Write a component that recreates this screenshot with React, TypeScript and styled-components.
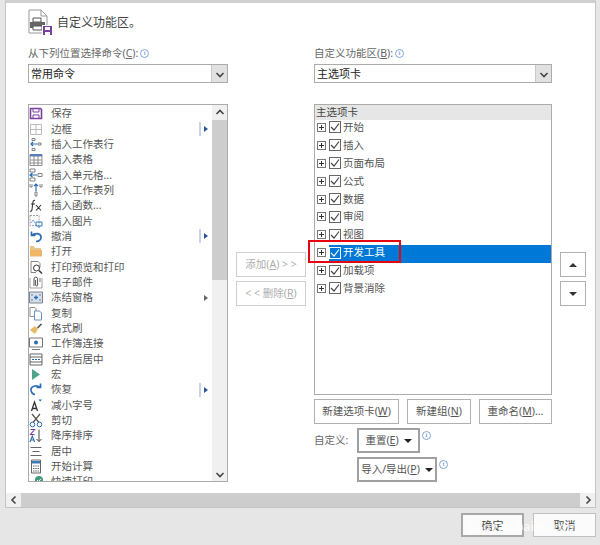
import { ReactNode } from "react";
import styled, { createGlobalStyle } from "styled-components";

const GlobalStyles = createGlobalStyle`
  * {
    box-sizing: border-box;
  }
  html, body {
    margin: 0;
    background: #e6e6e6;
  }
  body {
    font-family: "Noto Sans", "Noto Sans CJK SC", sans-serif;
    font-size: 10.5px;
    color: #4a4a4a;
  }
`;

const Page = styled.div`
  width: 600px;
  height: 545px;
  position: relative;
  overflow: hidden;
  background: #e6e6e6;
  display: flex;
  flex-direction: column;
  padding: 0 4px 0 5px;
`;

const Panel = styled.div`
  height: 508px;
  background: #fff;
  border: 1px solid #c4c4c4;
  border-top: 3px solid #d0d0d0;
  display: flex;
  flex-direction: column;
`;

const Content = styled.div`
  flex: 1;
  min-height: 0;
  padding: 6px 0 0 22px;
  display: grid;
  grid-template-columns: 200px 70px 238px 26px;
  grid-template-rows: 26px 69px 378px;
  column-gap: 8px;
`;

const Title = styled.div`
  grid-column: 1 / -1;
  display: flex;
  align-items: center;
  gap: 4px;
  font-size: 12px;
  color: #444;
`;

const Field = styled.div<{ $col: number }>`
  grid-column: ${(p) => p.$col};
  padding-top: 11px;
`;

const FieldLabel = styled.div`
  display: flex;
  align-items: center;
  gap: 2px;
  height: 15px;
  line-height: 15px;
  margin-bottom: 3px;
  color: #666;
`;

const Info = styled.span`
  width: 9px;
  height: 9px;
  border: 1px solid #7fa8dc;
  border-radius: 50%;
  color: #4f86cc;
  font-size: 7px;
  line-height: 7px;
  text-align: center;
  font-family: "Liberation Serif", serif;
  flex: none;
`;

const Select = styled.div`
  height: 19px;
  border: 1px solid #ababab;
  background: #fff;
  display: flex;
  align-items: center;
  justify-content: space-between;
  padding-left: 2px;
  line-height: 16px;
  font-size: 11px;
  color: #222;
`;

const SelectArrow = styled.span`
  width: 16px;
  height: 17px;
  background: #e1e1e1;
  border-left: 1px solid #c8c8c8;
  display: flex;
  align-items: center;
  justify-content: center;
`;

const CommandBox = styled.div`
  grid-column: 1;
  height: 378px;
  border: 1px solid #ababab;
  display: flex;
  overflow: hidden;
`;

const CommandList = styled.div`
  flex: 1;
  min-width: 0;
  margin-top: 1px;
`;

const CommandRow = styled.div`
  height: 15.35px;
  display: flex;
  align-items: center;
  position: relative;
  line-height: 15px;
  color: #555;
  white-space: nowrap;
`;

const CommandIcon = styled.span`
  width: 14px;
  height: 15px;
  margin-right: 8px;
  flex: none;
  display: flex;
  align-items: center;
  justify-content: center;
`;

const CommandArrow = styled.span<{ $blue?: boolean }>`
  margin-left: auto;
  margin-right: 4px;
  display: flex;
  align-items: center;
  gap: 3px;
  height: 14px;
  ${(p) => (p.$blue ? "border-left: 2px solid #c9d3e4; padding-left: 3px;" : "padding-left: 5px;")}
  &::after {
    content: "";
    border-left: 4px solid ${(p) => (p.$blue ? "#2b5797" : "#666")};
    border-top: 3px solid transparent;
    border-bottom: 3px solid transparent;
  }
`;

const VScroll = styled.div`
  width: 15px;
  background: #f0f0f0;
  display: flex;
  flex-direction: column;
  flex: none;
`;

const ScrollBtn = styled.div`
  height: 15px;
  flex: none;
  display: flex;
  align-items: center;
  justify-content: center;
`;

const VThumb = styled.div`
  height: 160px;
  background: #cdcdcd;
  flex: none;
`;

const Spacer = styled.div`
  flex: 1;
`;

const MiddleCol = styled.div`
  grid-column: 2;
  padding-top: 148px;
  display: flex;
  flex-direction: column;
  gap: 4px;
`;

const Button = styled.div<{ $w?: number; $disabled?: boolean }>`
  height: 25px;
  width: ${(p) => (p.$w ? `${p.$w}px` : "auto")};
  flex: none;
  border: 1px solid ${(p) => (p.$disabled ? "#cfcfcf" : "#b0b0b0")};
  background: #fff;
  color: ${(p) => (p.$disabled ? "#adadad" : "#555")};
  display: flex;
  align-items: center;
  justify-content: center;
  gap: 5px;
  white-space: nowrap;
  line-height: 15px;
`;

const RightCol = styled.div`
  grid-column: 3;
  display: flex;
  flex-direction: column;
`;

const Tree = styled.div`
  height: 291px;
  border: 1px solid #ababab;
  flex: none;
`;

const TreeHeader = styled.div`
  height: 15px;
  background: #e6e6e6;
  line-height: 15px;
  padding-left: 1px;
  color: #444;
`;

const TreeRow = styled.div`
  height: 17.9px;
  display: flex;
  align-items: center;
  padding-left: 2px;
  line-height: 15px;
  color: #555;
`;

const Expander = styled.span`
  width: 9px;
  height: 9px;
  border: 1px solid #777;
  margin: 0 3px 3px 0;
  position: relative;
  flex: none;
  &::before {
    content: "";
    position: absolute;
    left: 1px;
    right: 1px;
    top: 3px;
    height: 1px;
    background: #333;
  }
  &::after {
    content: "";
    position: absolute;
    top: 1px;
    bottom: 1px;
    left: 3px;
    width: 1px;
    background: #333;
  }
`;

const TreeLabel = styled.div<{ $active?: boolean }>`
  flex: 1;
  height: 100%;
  padding-bottom: 3px;
  display: flex;
  align-items: center;
  gap: 2px;
  background: ${(p) => (p.$active ? "#0078d7" : "transparent")};
  color: ${(p) => (p.$active ? "#fff" : "#555")};
`;

const Check = styled.span<{ $active?: boolean }>`
  width: 12px;
  height: 12px;
  border: 1px solid ${(p) => (p.$active ? "#fff" : "#666")};
  display: flex;
  align-items: center;
  justify-content: center;
  flex: none;
`;

const TreeActions = styled.div`
  display: flex;
  justify-content: space-between;
  margin-top: 4px;
`;

const CustomRow = styled.div`
  display: flex;
  gap: 2px;
  margin-top: 4px;
  align-items: flex-start;
`;

const CustomLabel = styled.div`
  width: 41px;
  flex: none;
  padding-top: 5px;
  color: #666;
  line-height: 15px;
`;

const MenuButton = styled(Button)`
  border: 2px solid #a0a0a0;
  color: #555;
  &::after {
    content: "";
    border-top: 4px solid #222;
    border-left: 4px solid transparent;
    border-right: 4px solid transparent;
  }
`;

const RowInfo = styled(Info)`
  margin-top: 3px;
`;

const MoveCol = styled.div`
  grid-column: 4;
  padding-top: 148px;
  display: flex;
  flex-direction: column;
  gap: 4px;
`;

const Triangle = styled.span<{ $up?: boolean }>`
  border-left: 4px solid transparent;
  border-right: 4px solid transparent;
  ${(p) => (p.$up ? "border-bottom: 4px solid #333;" : "border-top: 4px solid #333;")}
`;

const HScroll = styled.div`
  height: 14px;
  background: #f0f0f0;
  display: flex;
  flex: none;
`;

const HBtn = styled.div`
  width: 15px;
  display: flex;
  align-items: center;
  justify-content: center;
  flex: none;
`;

const HThumb = styled.div`
  flex: 1;
  background: #cdcdcd;
`;

const Footer = styled.div`
  display: flex;
  justify-content: flex-end;
  gap: 9px;
  padding-top: 5px;
`;

const FooterButton = styled.div<{ $primary?: boolean }>`
  width: 63px;
  height: 24px;
  background: #fbfbfb;
  border: ${(p) => (p.$primary ? "2px solid #a8a8a8" : "1px solid #c0c0c0")};
  display: flex;
  align-items: center;
  justify-content: center;
  color: #444;
  font-size: 11px;
`;

const Highlight = styled.div`
  position: absolute;
  left: 308px;
  top: 240px;
  width: 93px;
  height: 23px;
  border: 2px solid #e5060f;
`;

const Watermark = styled.div`
  position: absolute;
  left: 468px;
  top: 518px;
  font-size: 12px;
  font-weight: 700;
  color: rgba(255, 255, 255, 0.7);
  white-space: nowrap;
`;

const Chevron = ({ dir }: { dir: "up" | "down" | "left" | "right" }) => {
  const paths = { up: "M1.5 6 5 2.5 8.5 6", down: "M1.5 4 5 7.5 8.5 4", left: "M6.5 1.5 3 5 6.5 8.5", right: "M3.5 1.5 7 5 3.5 8.5" };
  return (
    <svg width="10" height="10" viewBox="0 0 10 10">
      <path d={paths[dir]} fill="none" stroke="#444" strokeWidth="1.6" />
    </svg>
  );
};

const Svg = ({ children }: { children: ReactNode }) => (
  <svg width="14" height="15" viewBox="0 0 14 15" fill="none">
    {children}
  </svg>
);

const icons: Record<string, ReactNode> = {
  save: (
    <>
      <path d="M1.5 2.5h10l1 1v9h-11z" stroke="#7b3fa0" strokeWidth="1.6" />
      <path d="M4 3v3h6V3M4 13V9h6v4" stroke="#7b3fa0" />
    </>
  ),
  border: <path d="M1.5 2.5h11v10h-11zM7 2.5v10M1.5 7.5h11" stroke="#bbb" />,
  insertRow: (
    <>
      <path d="M3 1.5h3v2H3zM3 11.5h3v2H3zM9 6h3v2H9z" stroke="#666" strokeWidth=".8" />
      <path d="M8 7H2M4 5 2 7l2 2" stroke="#2b6cb8" strokeWidth="1.2" />
    </>
  ),
  table: (
    <>
      <path d="M1 2.5h12v11H1zM1 8h12M1 11h12M5 2.5v11M9 2.5v11" stroke="#777" strokeWidth=".8" />
      <path d="M1 2h12v2.5H1z" fill="#5b7fb5" />
    </>
  ),
  insertCell: (
    <>
      <path d="M1 1h5v3H1zM1 10h5v3H1zM9 5.5h4v3H9z" stroke="#666" strokeWidth=".8" />
      <path d="M8 7H1M3.5 5 1 7l2.5 2" stroke="#2b6cb8" strokeWidth="1.2" />
    </>
  ),
  insertCol: (
    <>
      <path d="M1 1v3h2V1M11 1v3h2V1M6 9h2v4H6z" stroke="#666" strokeWidth=".8" />
      <path d="M7 8V1M5 3l2-2 2 2" stroke="#2b6cb8" strokeWidth="1.2" />
    </>
  ),
  fx: (
    <path d="M6 2.5C4.5 2 4 3 3.8 5L3 11.5C2.8 13 2 13.5 1 13M2 6h4M7 7l5 5.5M12 7l-5 5.5" stroke="#333" strokeWidth="1.1" />
  ),
  picture: (
    <>
      <path d="M1 1.5h9v10H1z" stroke="#888" strokeWidth=".8" strokeDasharray="2 1" />
      <path d="M2 9l2-3 2 3" stroke="#8aa9cf" />
      <path d="M7 8h6v4H7zM10 12v2" stroke="#2b7cc4" />
    </>
  ),
  undo: <path d="M2.5 2.5v4h4M3 6.5c2-2.5 8-3 9 1 .5 3-2 5-5 5" stroke="#2b6cb8" strokeWidth="1.7" />,
  open: (
    <>
      <path d="M1 4V2h4l1 2h6v2H1z" fill="#e6c48d" />
      <path d="M1 6h12v6.5H1z" fill="#f0b565" />
    </>
  ),
  preview: (
    <>
      <path d="M2 1.5h7l2 2v4M2 1.5v11h5" stroke="#777" strokeWidth=".9" />
      <circle cx="7.5" cy="8" r="3" stroke="#333" />
      <path d="M10 10.5l3 3" stroke="#333" strokeWidth="1.4" />
    </>
  ),
  mail: (
    <>
      <path d="M1 3v10h12V3" stroke="#888" strokeWidth=".8" />
      <path d="M5 11V4a1.8 1.8 0 0 1 3.6 0v6a1 1 0 0 1-2 0V5" stroke="#555" />
      <path d="M11 3v4" stroke="#777" />
    </>
  ),
  freeze: (
    <>
      <path d="M.5 2h13v11H.5z" fill="#d5e0ec" stroke="#667" strokeWidth=".8" />
      <path d="M5 7.5h4M7 5.5v4" stroke="#2b6cb8" strokeWidth="1.4" />
      <path d="M2 5h2M10 5h2M2 10h2M10 10h2" stroke="#778" />
    </>
  ),
  copy: (
    <>
      <path d="M1 1.5h5l1 1v8H1z" stroke="#777" strokeWidth=".8" />
      <path d="M5.5 5h5l2 2v7h-7z" fill="#fff" stroke="#5a86b8" strokeWidth=".9" />
    </>
  ),
  brush: (
    <>
      <path d="M1 9l5-4 3 3-3 5z" fill="#e8b964" />
      <path d="M8 6.5l4-4 1 1-4 4z" fill="#444" />
    </>
  ),
  connect: (
    <>
      <path d="M.5 2h13v9H.5zM3 13.5h8" stroke="#666" strokeWidth=".9" />
      <circle cx="7" cy="6.5" r="2" fill="#2b6cb8" />
    </>
  ),
  merge: (
    <>
      <path d="M1 2h12v11H1zM1 5h12M1 10h12" stroke="#555" strokeWidth=".9" />
      <path d="M3 7.5h8" stroke="#2b6cb8" strokeDasharray="2 1" />
    </>
  ),
  macro: <path d="M3 2l8 5.5L3 13z" fill="#4ea58a" />,
  redo: <path d="M11.5 1.5v4h-4M11 5.5c-3-2.5-8-2-9 1.5-.5 3 2 5.5 4 5.5" stroke="#2b6cb8" strokeWidth="1.7" />,
  shrink: (
    <>
      <path d="M2.5 13l3-9 3 9M3.6 10.5h3.8" stroke="#333" strokeWidth="1.3" />
      <path d="M9.5 1.5h3.5L11.2 3.6z" fill="#2b6cb8" />
    </>
  ),
  cut: (
    <>
      <path d="M3 1l7 8.5M11 1L4 9.5" stroke="#555" strokeWidth="1.2" />
      <circle cx="3.5" cy="11.5" r="2.3" stroke="#2b6cb8" />
      <circle cx="10.5" cy="11.5" r="2.3" stroke="#2b6cb8" />
    </>
  ),
  sort: (
    <>
      <path d="M1.5 1.5h4L1.5 6.5h4" stroke="#7b3fa0" strokeWidth="1.1" />
      <path d="M1 14l2.3-6 2.3 6M2 12h3" stroke="#2b6cb8" strokeWidth="1.1" />
      <path d="M10 1.5v12M7.5 11l2.5 2.5 2.5-2.5" stroke="#444" />
    </>
  ),
  center: <path d="M1.5 3.5h11M3.5 7.5h7M1.5 11.5h11" stroke="#666" />,
  calc: (
    <>
      <path d="M2.5 1h9v13h-9z" stroke="#666" />
      <path d="M3 2h8v2.5H3z" fill="#3b78b8" />
      <path d="M4 7h1.5M6.3 7h1.5M8.6 7h1.5M4 9.5h1.5M6.3 9.5h1.5M8.6 9.5h1.5M4 12h1.5M6.3 12h1.5M8.6 12h1.5" stroke="#666" />
    </>
  ),
  quick: (
    <>
      <path d="M0 9h7v5H0z" fill="#666" />
      <circle cx="10" cy="6" r="4" fill="#3f9b7c" />
      <path d="M8 6l1.5 1.5L12 4.8" stroke="#fff" />
    </>
  ),
};

type Command = { label: string; icon: string; arrow?: "blue" | "gray" };

const commands: Command[] = [
  { label: "保存", icon: "save" },
  { label: "边框", icon: "border", arrow: "blue" },
  { label: "插入工作表行", icon: "insertRow" },
  { label: "插入表格", icon: "table" },
  { label: "插入单元格...", icon: "insertCell" },
  { label: "插入工作表列", icon: "insertCol" },
  { label: "插入函数...", icon: "fx" },
  { label: "插入图片", icon: "picture" },
  { label: "撤消", icon: "undo", arrow: "blue" },
  { label: "打开", icon: "open" },
  { label: "打印预览和打印", icon: "preview" },
  { label: "电子邮件", icon: "mail" },
  { label: "冻结窗格", icon: "freeze", arrow: "gray" },
  { label: "复制", icon: "copy" },
  { label: "格式刷", icon: "brush" },
  { label: "工作簿连接", icon: "connect" },
  { label: "合并后居中", icon: "merge" },
  { label: "宏", icon: "macro" },
  { label: "恢复", icon: "redo", arrow: "blue" },
  { label: "减小字号", icon: "shrink" },
  { label: "剪切", icon: "cut" },
  { label: "降序排序", icon: "sort" },
  { label: "居中", icon: "center" },
  { label: "开始计算", icon: "calc" },
  { label: "快速打印", icon: "quick" },
];

const tabs = ["开始", "插入", "页面布局", "公式", "数据", "审阅", "视图", "开发工具", "加载项", "背景消除"];

const Tick = ({ color }: { color: string }) => (
  <svg width="10" height="10" viewBox="0 0 10 10">
    <path d="M1 5l3 3 5-6.5" fill="none" stroke={color} strokeWidth="1.2" />
  </svg>
);

const HeaderIcon = () => (
  <svg width="25" height="27" viewBox="0 0 25 27" fill="none">
    <path d="M1 1h12l6 6v17H1z" fill="#fff" stroke="#999" />
    <path d="M13 1v6h6" stroke="#999" />
    <path d="M5 9h8v4H5z" stroke="#555" />
    <path d="M2 13h15v6H2z" fill="#666" />
    <path d="M5 17h9v4H5z" fill="#fff" stroke="#555" />
    <path d="M14 16h11v11H14z" fill="#fff" />
    <path d="M15 17h9v9h-9z" fill="#7b3fa0" />
    <path d="M17 18h5v3h-5zM17 23h5v3h-5z" fill="#fff" />
  </svg>
);

function App() {
  return (
    <Page>
      <GlobalStyles />
      <Panel>
        <Content>
          <Title>
            <HeaderIcon />
            <span>自定义功能区。</span>
          </Title>
          <Field $col={1}>
            <FieldLabel>
              <span>
                从下列位置选择命令(<u>C</u>):
              </span>
              <Info>i</Info>
            </FieldLabel>
            <Select>
              常用命令
              <SelectArrow>
                <Chevron dir="down" />
              </SelectArrow>
            </Select>
          </Field>
          <Field $col={3}>
            <FieldLabel>
              <span>
                自定义功能区(<u>B</u>):
              </span>
              <Info>i</Info>
            </FieldLabel>
            <Select>
              主选项卡
              <SelectArrow>
                <Chevron dir="down" />
              </SelectArrow>
            </Select>
          </Field>
          <CommandBox>
            <CommandList>
              {commands.map((c) => (
                <CommandRow key={c.label}>
                  <CommandIcon>
                    <Svg>{icons[c.icon]}</Svg>
                  </CommandIcon>
                  {c.label}
                  {c.arrow && <CommandArrow $blue={c.arrow === "blue"} />}
                </CommandRow>
              ))}
            </CommandList>
            <VScroll>
              <ScrollBtn>
                <Chevron dir="up" />
              </ScrollBtn>
              <VThumb />
              <Spacer />
              <ScrollBtn>
                <Chevron dir="down" />
              </ScrollBtn>
            </VScroll>
          </CommandBox>
          <MiddleCol>
            <Button $disabled>
              <span>
                添加(<u>A</u>) &gt; &gt;
              </span>
            </Button>
            <Button $disabled>
              <span>
                &lt; &lt; 删除(<u>R</u>)
              </span>
            </Button>
          </MiddleCol>
          <RightCol>
            <Tree>
              <TreeHeader>主选项卡</TreeHeader>
              {tabs.map((t) => {
                const active = t === "开发工具";
                return (
                  <TreeRow key={t}>
                    <Expander />
                    <TreeLabel $active={active}>
                      <Check $active={active}>
                        <Tick color={active ? "#fff" : "#444"} />
                      </Check>
                      {t}
                    </TreeLabel>
                  </TreeRow>
                );
              })}
            </Tree>
            <TreeActions>
              <Button $w={85}>
                <span>
                  新建选项卡(<u>W</u>)
                </span>
              </Button>
              <Button $w={64}>
                <span>
                  新建组(<u>N</u>)
                </span>
              </Button>
              <Button $w={73}>
                <span>
                  重命名(<u>M</u>)...
                </span>
              </Button>
            </TreeActions>
            <CustomRow>
              <CustomLabel>自定义:</CustomLabel>
              <MenuButton $w={63}>
                <span>
                  重置(<u>E</u>)
                </span>
              </MenuButton>
              <RowInfo>i</RowInfo>
            </CustomRow>
            <CustomRow>
              <CustomLabel />
              <MenuButton $w={80}>
                <span>
                  导入/导出(<u>P</u>)
                </span>
              </MenuButton>
              <RowInfo>i</RowInfo>
            </CustomRow>
          </RightCol>
          <MoveCol>
            <Button $w={26}>
              <Triangle $up />
            </Button>
            <Button $w={26}>
              <Triangle />
            </Button>
          </MoveCol>
        </Content>
        <HScroll>
          <HBtn>
            <Chevron dir="left" />
          </HBtn>
          <HThumb />
          <HBtn>
            <Chevron dir="right" />
          </HBtn>
        </HScroll>
      </Panel>
      <Footer>
        <FooterButton $primary>确定</FooterButton>
        <FooterButton>取消</FooterButton>
      </Footer>
      <Highlight />
      <Watermark>jingyan.baidu.com</Watermark>
    </Page>
  );
}

export default App;
